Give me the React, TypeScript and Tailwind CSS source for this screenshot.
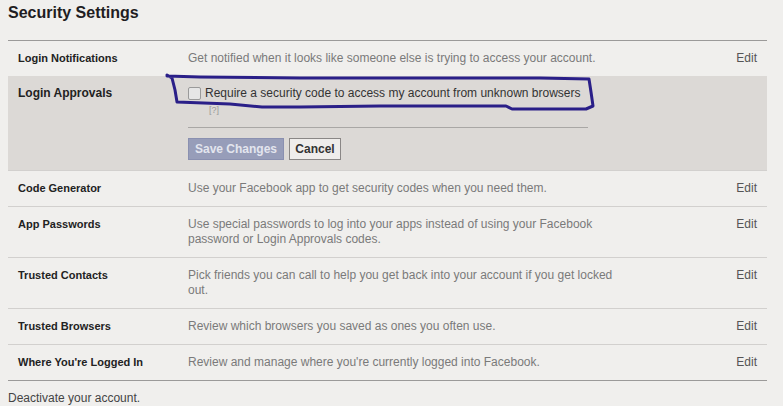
import React from "react";

const rows1 = [
  { label: "Login Notifications", desc: "Get notified when it looks like someone else is trying to access your account." },
];
const rows2 = [
  { label: "Code Generator", desc: "Use your Facebook app to get security codes when you need them." },
  { label: "App Passwords", desc: "Use special passwords to log into your apps instead of using your Facebook password or Login Approvals codes." },
  { label: "Trusted Contacts", desc: "Pick friends you can call to help you get back into your account if you get locked out." },
  { label: "Trusted Browsers", desc: "Review which browsers you saved as ones you often use." },
  { label: "Where You're Logged In", desc: "Review and manage where you're currently logged into Facebook." },
];

function Row({ label, desc, first }: { label: string; desc: string; first?: boolean }) {
  return (
    <div className={`flex px-[10px] pt-[10px] pb-[10px] text-[12px] leading-[15px] ${first ? "" : "border-t border-[#d2d0ce]"}`}>
      <div className="w-[170px] shrink-0 font-bold text-[11px] text-[#222]">{label}</div>
      <div className="w-[430px] shrink-0 text-[#7a7a7a]">{desc}</div>
      <div className="flex-1 text-right text-[#555]">Edit</div>
    </div>
  );
}

export default function App() {
  return (
    <div
      className="relative w-[783px] h-[406px] overflow-hidden bg-[#f0efed]"
      style={{ fontFamily: '"Liberation Sans", Arial, sans-serif' }}
    >
      <div className="pl-2 pt-[3px] text-[16px] font-bold leading-[20px] text-[#1f1d22]">Security Settings</div>
      <div className="ml-2 mt-[17px] w-[759px] border-t border-[#9b9a99]">
        {rows1.map((r) => (
          <Row key={r.label} label={r.label} desc={r.desc} first />
        ))}
        <div className="flex bg-[#dcd9d6] px-[10px] pt-[10px] pb-[10px] text-[12px] leading-[15px]">
          <div className="w-[170px] shrink-0 font-bold text-[12px] text-[#222]">Login Approvals</div>
          <div className="flex flex-col">
            <div className="flex items-center">
              <div className="h-[13px] w-[13px] rounded-[2px] border border-[#9a9a9a] bg-[#e6e6e6]" />
              <span className="ml-[4px] text-[#333]">Require a security code to access my account from unknown browsers</span>
            </div>
            <div className="ml-[21px] mt-[4px] h-[11px] text-[9px] leading-[11px] text-[#9a9a9a]">[?]</div>
            <div className="mt-[11px] w-[400px] border-t border-[#a9a7a5]" />
            <div className="mt-[10px] flex gap-[5px]">
              <div className="flex h-[22px] w-[96px] items-center justify-center border border-[#8a90b0] bg-[#979db9] text-[12px] font-bold text-[#e3e5ee]">
                Save Changes
              </div>
              <div className="flex h-[22px] w-[52px] items-center justify-center border border-[#8a8786] bg-[#efedeb] text-[12px] font-bold text-[#333]">
                Cancel
              </div>
            </div>
          </div>
        </div>
        {rows2.map((r) => (
          <Row key={r.label} label={r.label} desc={r.desc} />
        ))}
        <div className="border-t border-[#9b9a99]" />
      </div>
      <div className="ml-2 mt-[10px] text-[12px] leading-[15px] text-[#444]">Deactivate your account.</div>
      <svg className="pointer-events-none absolute left-0 top-0" width="783" height="406">
        <path
          d="M167 75 L172 78 L175 90 L177 102 L230 104 L262 107 L300 107 L380 106 L506 106 L512 109 L586 109 L593 106 L591 92 L589 79 L540 78 L300 78 L200 77 L167 76"
          fill="none"
          stroke="#2a1f88"
          strokeWidth="3"
          strokeLinejoin="round"
          strokeLinecap="round"
        />
      </svg>
    </div>
  );
}
